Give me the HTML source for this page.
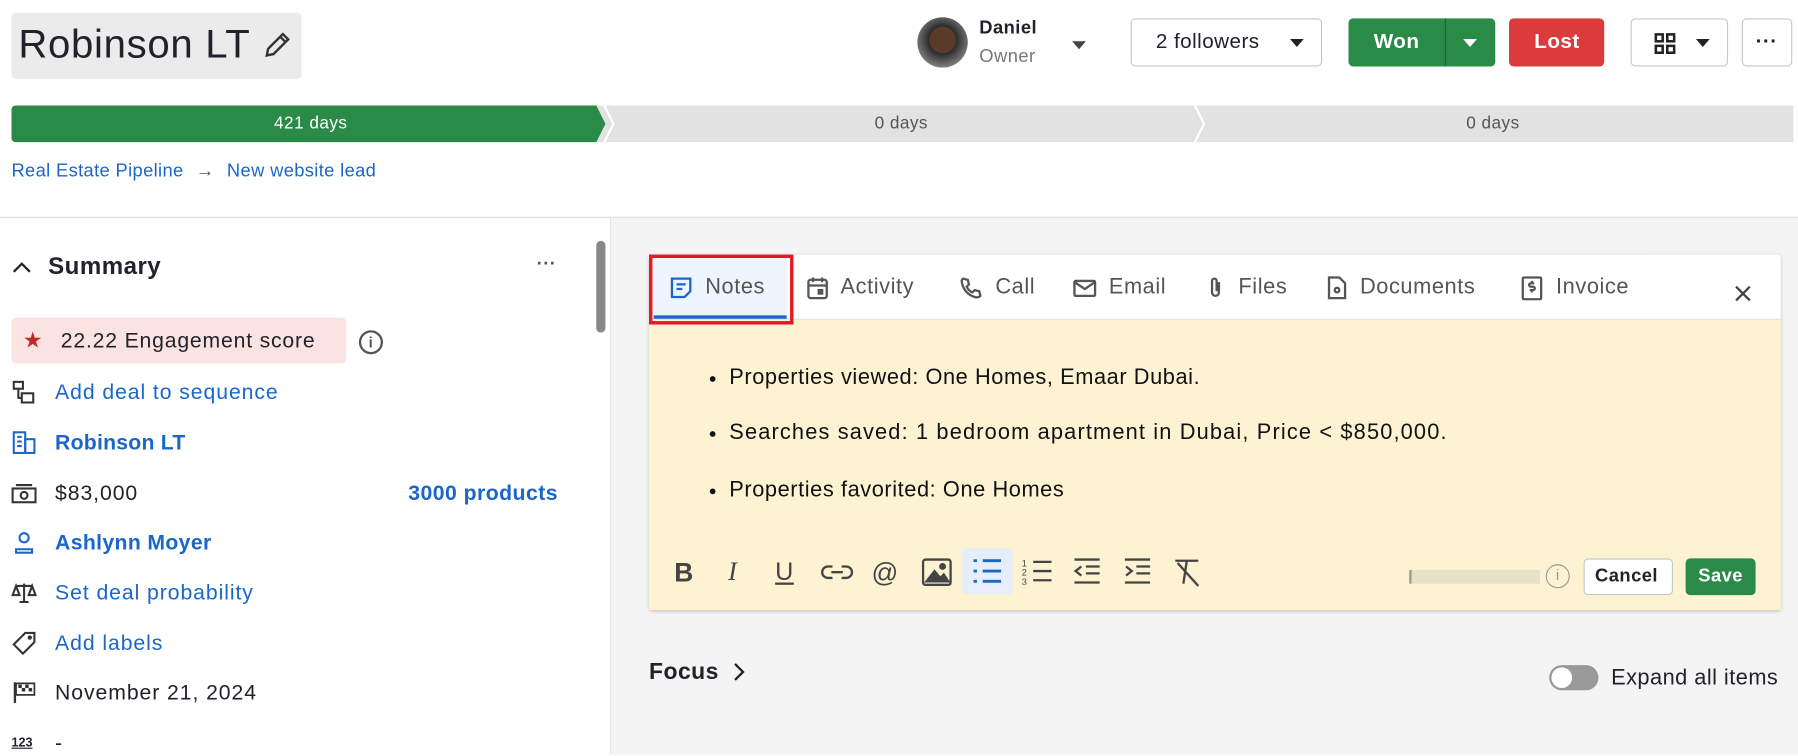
<!DOCTYPE html>
<html><head><meta charset="utf-8"><style>
*{box-sizing:border-box;margin:0;padding:0}
html,body{width:1798px;height:755px;overflow:hidden;background:#fff}
#w{position:absolute;left:0;top:0;width:1568px;height:658px;transform:scale(1.14668);transform-origin:0 0;font-family:"Liberation Sans",Arial,sans-serif;color:#21232c;letter-spacing:0.4px}
.a{position:absolute}
.blue{color:#1a67c9}
.btn{position:absolute;border:1px solid #c8c8c8;border-radius:4px;background:#fff}
.row{position:absolute;left:10px;font-size:18.5px;display:flex;align-items:center;letter-spacing:0.8px}
.row svg{margin-right:16px}
.tab{position:absolute;top:240px;font-size:19px;color:#555;display:flex;align-items:center;letter-spacing:0.5px}
.tab svg{margin-right:10px}
.tb{position:absolute;top:486px}
</style></head><body><div id="w">
<div class="a" style="left:10px;top:11px;width:253px;height:58px;background:#ebebeb;border-radius:4px"></div>
<div class="a" style="left:16px;top:19px;font-size:35px;color:#21232c;letter-spacing:0.6px">Robinson LT</div>
<svg class="a" style="left:228px;top:25px" width="28" height="28" viewBox="0 0 24 24" fill="none" stroke="#333" stroke-width="1.8"><path d="M4 20l1-5L16 4l4 4L9 19z M14 6l4 4"/></svg>
<div class="a" style="left:800px;top:15px;width:44px;height:44px;border-radius:50%;background:radial-gradient(circle at 50% 45%,#5a3a28 0 35%,#2a2a2a 36%,#777 70%,#ccc 100%)"></div>
<div class="a" style="left:854px;top:16px;font-size:16px;font-weight:bold">Daniel</div>
<div class="a" style="left:854px;top:41px;font-size:16px;color:#777">Owner</div>
<div class="a" style="left:935px;top:36px;border:6px solid transparent;border-top:7px solid #444;border-bottom:0"></div>
<div class="btn" style="left:986px;top:16px;width:167px;height:42px"></div>
<div class="a" style="left:1008px;top:26px;font-size:18px">2 followers</div>
<div class="a" style="left:1125px;top:34px;border:6px solid transparent;border-top:7px solid #222;border-bottom:0"></div>
<div class="a" style="left:1176px;top:16px;width:128px;height:42px;background:#2a8a48;border-radius:4px"></div>
<div class="a" style="left:1260px;top:16px;width:1px;height:42px;background:#1b6a33"></div>
<div class="a" style="left:1198px;top:26px;font-size:18px;color:#fff;font-weight:bold">Won</div>
<div class="a" style="left:1276px;top:34px;border:6px solid transparent;border-top:7px solid #fff;border-bottom:0"></div>
<div class="a" style="left:1316px;top:16px;width:83px;height:42px;background:#db3b3b;border-radius:4px"></div>
<div class="a" style="left:1338px;top:26px;font-size:18px;color:#fff;font-weight:bold">Lost</div>
<div class="btn" style="left:1422px;top:16px;width:85px;height:42px"></div>
<svg class="a" style="left:1442px;top:28px" width="20" height="20" viewBox="0 0 20 20" fill="none" stroke="#222" stroke-width="2.2"><rect x="2" y="2" width="6" height="6"/><rect x="12" y="2" width="6" height="6"/><rect x="2" y="12" width="6" height="6"/><rect x="12" y="12" width="6" height="6"/></svg>
<div class="a" style="left:1479px;top:34px;border:6px solid transparent;border-top:7px solid #222;border-bottom:0"></div>
<div class="btn" style="left:1519px;top:16px;width:44px;height:42px"></div>
<div class="a" style="left:1531px;top:26px;font-size:18px;font-weight:bold">···</div>
<svg class="a" style="left:10px;top:92px" width="1554" height="32">
<path d="M4 0H1554V32H4Q0 32 0 28V4Q0 0 4 0Z" fill="#e2e2e2"/>
<path d="M4 0H510L518 16L510 32H4Q0 32 0 28V4Q0 0 4 0Z" fill="#2a8a48"/>
<path d="M517 0L525 16L517 32" stroke="#fff" stroke-width="2" fill="none"/>
<path d="M1032 0L1040 16L1032 32" stroke="#fff" stroke-width="2" fill="none"/>
<text x="261" y="20" font-size="15" fill="#fff" text-anchor="middle" font-family="Liberation Sans">421 days</text>
<text x="776" y="20" font-size="15" fill="#555" text-anchor="middle" font-family="Liberation Sans">0 days</text>
<text x="1292" y="20" font-size="15" fill="#555" text-anchor="middle" font-family="Liberation Sans">0 days</text></svg>
<div class="a blue" style="left:10px;top:141px;font-size:16px;letter-spacing:0.3px">Real Estate Pipeline <span style="color:#555;margin:0 6px">→</span> New website lead</div>
<div class="a" style="left:0;top:189px;width:1568px;height:1px;background:#ddd"></div>
<div class="a" style="left:533px;top:190px;width:1035px;height:468px;background:#f4f4f4"></div>
<div class="a" style="left:532px;top:190px;width:1px;height:468px;background:#e4e4e4"></div>
<div class="a" style="left:520px;top:210px;width:8px;height:80px;background:#888;border-radius:4px"></div>
<svg class="a" style="left:10px;top:226px" width="18" height="14" viewBox="0 0 18 14" fill="none" stroke="#222" stroke-width="2"><path d="M2 11L9 4L16 11"/></svg>
<div class="a" style="left:42px;top:221px;font-size:21px;font-weight:bold;color:#21232c">Summary</div>
<div class="a" style="left:468px;top:222px;font-size:16px;font-weight:bold;color:#555">···</div>
<div class="a" style="left:10px;top:277px;width:292px;height:40px;background:#fbe3e1;border-radius:4px"></div>
<div class="a" style="left:20px;top:286px;font-size:19px;color:#c62828">★</div>
<div class="a" style="left:53px;top:286px;font-size:18.5px;letter-spacing:0.7px">22.22 Engagement score</div>
<div class="a" style="left:313px;top:288px;width:21px;height:21px;border:2px solid #555;border-radius:50%;font-size:13px;text-align:center;line-height:17px;color:#555;font-weight:bold">i</div>
<div class="row blue" style="top:331px"><svg width="22" height="22" viewBox="0 0 22 22" fill="none" stroke="#333" stroke-width="1.8"><rect x="2" y="2" width="8" height="6"/><rect x="9" y="12" width="10" height="8"/><path d="M6 8v8h3"/></svg>Add deal to sequence</div>
<div class="row blue" style="top:375px;font-weight:bold;letter-spacing:0.2px"><svg width="22" height="22" viewBox="0 0 22 22" fill="none" stroke="#1a67c9" stroke-width="1.8"><rect x="2" y="2" width="10" height="18"/><rect x="12" y="8" width="8" height="12"/><path d="M5 6h4M5 10h4M5 14h4"/></svg>Robinson LT</div>
<div class="row" style="top:419px"><svg width="22" height="22" viewBox="0 0 22 22" fill="none" stroke="#333" stroke-width="1.8"><rect x="1" y="7" width="20" height="12"/><circle cx="11" cy="13" r="3"/><path d="M4 4h14"/></svg>$83,000</div>
<div class="a blue" style="left:356px;top:419px;font-size:18.5px;font-weight:bold;letter-spacing:0.4px">3000 products</div>
<div class="row blue" style="top:462px;font-weight:bold;letter-spacing:0.3px"><svg width="22" height="22" viewBox="0 0 22 22" fill="none" stroke="#1a67c9" stroke-width="1.8"><circle cx="11" cy="7" r="4"/><path d="M4 20v-3h14v3z"/></svg>Ashlynn Moyer</div>
<div class="row blue" style="top:506px"><svg width="22" height="22" viewBox="0 0 22 22" fill="none" stroke="#333" stroke-width="1.8"><path d="M11 3v16M4 5h14M1 13l3-8 3 8zM15 13l3-8 3 8zM7 19h8"/></svg>Set deal probability</div>
<div class="row blue" style="top:550px"><svg width="22" height="22" viewBox="0 0 22 22" fill="none" stroke="#333" stroke-width="1.8"><path d="M12 2h8v8L10 20 2 12z"/><circle cx="16" cy="6" r="1"/></svg>Add labels</div>
<div class="row" style="top:593px"><svg width="22" height="22" viewBox="0 0 22 22" fill="#333"><rect x="2" y="2" width="2" height="18"/><path d="M4 3h16v10H4z" fill="none" stroke="#333" stroke-width="1.5"/><rect x="6" y="4" width="3" height="3"/><rect x="12" y="4" width="3" height="3"/><rect x="9" y="7" width="3" height="3"/><rect x="15" y="7" width="3" height="3"/></svg>November 21, 2024</div>
<div class="row" style="top:637px;letter-spacing:0"><span style="font-size:11px;font-weight:bold;width:22px;margin-right:16px;text-decoration:underline">123</span>-</div>
<div class="a" style="left:566px;top:222px;width:987px;height:310px;background:#fff;box-shadow:0 1px 3px rgba(0,0,0,.2);border-radius:3px"></div>
<div class="a" style="left:566px;top:278px;width:987px;height:254px;background:#fdf3d3;border-top:1px solid #e4e4e4"></div>
<div class="a" style="left:570px;top:226px;width:116px;height:52px;background:#eef5fe;border-bottom:3px solid #1a67c9"></div>
<div class="a" style="left:566px;top:222px;width:126px;height:61px;border:3px solid #e51b23"></div>
<div class="tab blue" style="left:583px"><svg width="22" height="22" viewBox="0 0 22 22" fill="none" stroke="#1a67c9" stroke-width="2"><path d="M3 3h16v11l-5 5H3z M7 8h8M7 12h5"/></svg>Notes</div>
<div class="tab" style="left:703px"><svg width="20" height="22" viewBox="0 0 20 22" fill="none" stroke="#555" stroke-width="2"><rect x="2" y="4" width="16" height="16" rx="2"/><path d="M2 9h16M6 2v4M14 2v4"/><rect x="11" y="13" width="3" height="3" fill="#555"/></svg>Activity</div>
<div class="tab" style="left:836px"><svg width="22" height="22" viewBox="0 0 22 22" fill="none" stroke="#555" stroke-width="2"><path d="M4 3l4 1 1 4-2 2q2 4 5 5l2-2 4 1 1 4q-2 2-5 1Q5 16 3 7q-1-3 1-4z"/></svg>Call</div>
<div class="tab" style="left:935px"><svg width="22" height="22" viewBox="0 0 22 22" fill="none" stroke="#555" stroke-width="2"><rect x="2" y="5" width="18" height="13" rx="1"/><path d="M2 6l9 6 9-6"/></svg>Email</div>
<div class="tab" style="left:1050px"><svg width="20" height="22" viewBox="0 0 20 22" fill="none" stroke="#555" stroke-width="2"><path d="M13 6v9a3 3 0 0 1-6 0V5a2 2 0 0 1 4 0v9"/></svg>Files</div>
<div class="tab" style="left:1156px"><svg width="20" height="22" viewBox="0 0 20 22" fill="none" stroke="#555" stroke-width="2"><path d="M3 2h9l5 5v13H3z"/><circle cx="10" cy="13" r="2"/></svg>Documents</div>
<div class="tab" style="left:1325px"><svg width="22" height="22" viewBox="0 0 22 22" fill="none" stroke="#555" stroke-width="2"><rect x="3" y="2" width="16" height="19" rx="1"/><path d="M13 7h-3a1.5 1.5 0 0 0 0 3h2a1.5 1.5 0 0 1 0 3H9M11 5v2M11 13v2"/></svg>Invoice</div>
<svg class="a" style="left:1512px;top:248px" width="16" height="16" viewBox="0 0 16 16" stroke="#444" stroke-width="2"><path d="M2 2L14 14M14 2L2 14"/></svg>
<ul class="a" style="left:636px;top:319px;font-size:19px;color:#111;list-style:disc;letter-spacing:0.5px">
<li style="position:absolute;top:0;white-space:nowrap">Properties viewed: One Homes, Emaar Dubai.</li>
<li style="position:absolute;top:48px;white-space:nowrap;letter-spacing:1px">Searches saved: 1 bedroom apartment in Dubai, Price &lt; $850,000.</li>
<li style="position:absolute;top:98px;white-space:nowrap">Properties favorited: One Homes</li></ul>
<div class="tb" style="left:588px;font-size:23px;font-weight:bold;color:#444">B</div>
<div class="tb" style="left:635px;font-size:23px;font-style:italic;color:#444;font-family:'Liberation Serif',serif">I</div>
<div class="tb" style="left:676px;font-size:22px;text-decoration:underline;color:#444">U</div>
<svg class="a" style="left:715px;top:488px" width="30" height="22" viewBox="0 0 30 22" fill="none" stroke="#444" stroke-width="2"><path d="M11 6H7a5 5 0 0 0 0 10h4M19 6h4a5 5 0 0 1 0 10h-4M10 11h10"/></svg>
<div class="tb" style="left:760px;font-size:23px;color:#444">@</div>
<svg class="a" style="left:803px;top:486px" width="28" height="26" viewBox="0 0 28 26" fill="none" stroke="#444" stroke-width="2"><rect x="2" y="2" width="24" height="22" rx="2"/><path d="M5 21l7-9 5 6 3-3 4 6z" fill="#444"/><circle cx="19" cy="8" r="2" fill="#444"/></svg>
<div class="a" style="left:839px;top:478px;width:44px;height:40px;background:#e6eef9;border-radius:3px"></div>
<svg class="a" style="left:847px;top:486px" width="28" height="24" viewBox="0 0 28 24" stroke="#1a67c9" stroke-width="2.5"><path d="M2 3h3M2 12h3M2 21h3M10 3h16M10 12h16M10 21h16"/></svg>
<svg class="a" style="left:891px;top:486px" width="28" height="24" viewBox="0 0 28 24" stroke="#444" stroke-width="2"><path d="M10 4h16M10 12h16M10 20h16"/><text x="0" y="8" font-size="8" fill="#444" stroke="none">1</text><text x="0" y="16" font-size="8" fill="#444" stroke="none">2</text><text x="0" y="24" font-size="8" fill="#444" stroke="none">3</text></svg>
<svg class="a" style="left:935px;top:486px" width="26" height="24" viewBox="0 0 26 24" fill="none" stroke="#444" stroke-width="2"><path d="M2 2h22M12 8h12M12 14h12M2 22h22M8 8l-5 4 5 4"/></svg>
<svg class="a" style="left:979px;top:486px" width="26" height="24" viewBox="0 0 26 24" fill="none" stroke="#444" stroke-width="2"><path d="M2 2h22M12 8h12M12 14h12M2 22h22M3 8l5 4-5 4"/></svg>
<svg class="a" style="left:1022px;top:486px" width="26" height="26" viewBox="0 0 26 26" fill="none" stroke="#444" stroke-width="2"><path d="M3 3h20M13 3l-3 20M5 5l18 20"/></svg>
<div class="a" style="left:1229px;top:497px;width:114px;height:12px;background:#e7e2c6;border-left:2px solid #999"></div>
<div class="a" style="left:1348px;top:492px;width:21px;height:21px;border:1.5px solid #999;border-radius:50%;font-size:13px;text-align:center;line-height:18px;color:#999">i</div>
<div class="btn" style="left:1381px;top:487px;width:78px;height:32px"></div>
<div class="a" style="left:1391px;top:494px;font-size:16px;font-weight:bold">Cancel</div>
<div class="a" style="left:1470px;top:487px;width:61px;height:32px;background:#2a8a48;border-radius:4px;color:#fff;font-weight:bold;font-size:16px;text-align:center;line-height:32px">Save</div>
<div class="a" style="left:566px;top:575px;font-size:20px;font-weight:bold">Focus</div>
<svg class="a" style="left:637px;top:576px" width="14" height="20" viewBox="0 0 14 20" fill="none" stroke="#222" stroke-width="2"><path d="M4 3l7 7-7 7"/></svg>
<div class="a" style="left:1351px;top:580px;width:43px;height:22px;background:#999;border-radius:11px"></div>
<div class="a" style="left:1353px;top:582px;width:18px;height:18px;background:#fff;border-radius:50%"></div>
<div class="a" style="left:1405px;top:581px;font-size:19px">Expand all items</div>
</div></body></html>
